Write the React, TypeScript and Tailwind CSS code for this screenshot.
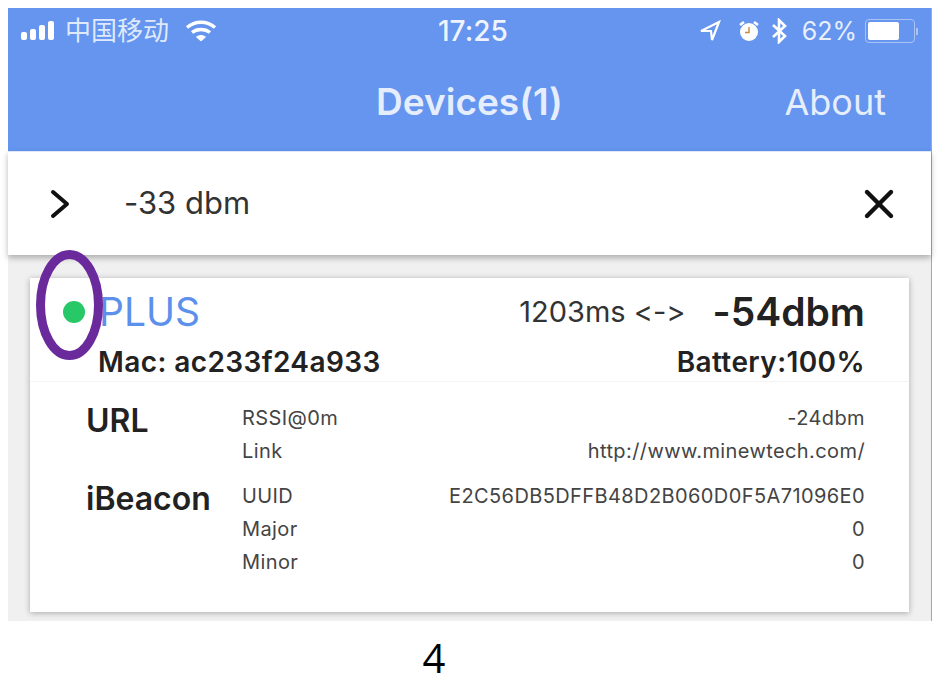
import { X } from "lucide-react";

const sans = "font-['Inter','Noto_Sans_CJK_SC',sans-serif] [font-variant-ligatures:none]";

function Signal() {
  return (
    <svg width="36" height="20" viewBox="0 0 36 20" fill="#fff">
      <rect x="0" y="11" width="6" height="8" rx="2" />
      <rect x="9" y="8" width="6" height="11" rx="2" />
      <rect x="18" y="4" width="6" height="15" rx="2" />
      <rect x="27" y="0" width="6" height="19" rx="2" />
    </svg>
  );
}

function Wifi() {
  return (
    <svg width="32" height="22" viewBox="0 0 32 22" fill="none" stroke="#fff" strokeWidth="3.4">
      <path d="M2 7.5C10 .5 22 .5 30 7.5" />
      <path d="M7 12.5C12 8.5 20 8.5 25 12.5" />
      <path d="M11.5 17C14 15 18 15 20.5 17L16 21Z" fill="#fff" strokeWidth="1" />
    </svg>
  );
}

function StatusIcons() {
  return (
    <div className="flex items-center">
      <svg width="22" height="22" viewBox="0 0 22 22" fill="none" stroke="#fff" strokeWidth="2.2" className="mr-[16px]">
        <path d="M20 2 2 11l10 0 1 9Z" />
      </svg>
      <svg width="24" height="24" viewBox="0 0 24 24" className="mr-[10px]">
        <circle cx="12" cy="13" r="9" fill="#fff" />
        <path d="M3 6l4-3M21 6l-4-3" stroke="#fff" strokeWidth="2.6" />
        <path d="M12 8v5.5H8" fill="none" stroke="#c98a3a" strokeWidth="1.4" />
      </svg>
      <svg width="16" height="26" viewBox="0 0 16 26" fill="none" stroke="#fff" strokeWidth="2.6" className="mr-[15px]">
        <path d="M2 7l12 11-6 6V2l6 6L2 19" />
      </svg>
      <span className="mr-[8px] text-[25px] leading-none text-[#e8effd]">62%</span>
      <div className="flex h-[24px] w-[50px] items-center rounded-[4px] border border-[#a9c3f5] p-[2px]">
        <div className="h-full w-[31px] rounded-[2px] bg-white" />
      </div>
      <div className="ml-[1px] h-[7px] w-[2px] bg-[#a9c3f5]" />
    </div>
  );
}

function DataRow({ label, value }: { label: string; value: string }) {
  return (
    <div className="flex h-[33px] items-center justify-between text-[20px] tracking-[0.4px] text-[#444]">
      <span>{label}</span>
      <span>{value}</span>
    </div>
  );
}

function Frame({ name, rows }: { name: string; rows: [string, string][] }) {
  return (
    <div className="flex">
      <div className="w-[156px] pt-[2px] text-[32px] leading-[36px] font-semibold text-[#222]">{name}</div>
      <div className="flex-1">
        {rows.map(([label, value]) => (
          <DataRow key={label} label={label} value={value} />
        ))}
      </div>
    </div>
  );
}

export default function App() {
  return (
    <div className={`relative h-[677px] w-[939px] bg-white pt-2 pl-2 ${sans}`}>
      <div className="flex h-[613px] w-[924px] flex-col border-r border-[#a8a8a8]">
        <header className="h-[143px] bg-[#6595ee] text-white">
          <div className="relative flex h-[46px] items-center justify-between pr-[13px] pl-[13px]">
            <div className="flex items-center">
              <Signal />
              <span className="ml-[8px] text-[26px] leading-none text-[#dfe9fc]">中国移动</span>
              <div className="ml-[16px]">
                <Wifi />
              </div>
            </div>
            <span className="absolute left-[430px] text-[28px] font-medium text-[#eef3fe]">17:25</span>
            <StatusIcons />
          </div>
          <div className="relative flex h-[97px] items-start justify-center pt-[24px]">
            <span className="text-[37px] leading-[48px] font-semibold text-[#e6eefd]">Devices(1)</span>
            <span className="absolute right-[45px] text-[36px] leading-[48px] text-[#e6eefd]">About</span>
          </div>
        </header>

        <div className="relative z-10 flex h-[104px] items-center justify-between border-t border-[#dfe8fb] bg-white pr-[28px] pl-[41px] shadow-[0_3px_6px_rgba(0,0,0,0.28)]">
          <div className="flex items-center">
            <svg width="22" height="32" viewBox="0 0 22 32" fill="none" stroke="#111" strokeWidth="4" strokeLinecap="round" strokeLinejoin="round">
              <path d="M4 4l14 12L4 28" />
            </svg>
            <span className="ml-[53px] text-[31px] text-[#333]">-33 dbm</span>
          </div>
          <X size={48} strokeWidth={2.2} className="text-[#111]" />
        </div>

        <div className="flex-1 bg-[#f0f0f0] pt-[23px] pr-[22px] pb-[9px] pl-[22px]">
          <div className="h-[334px] bg-white shadow-[0_1px_6px_rgba(0,0,0,0.3)]">
            <div className="flex h-[104px] justify-between border-b border-[#f4f4f4] pr-[44px] pl-[68px]">
              <div className="pt-[12px]">
                <div className="flex items-center">
                  <span className="-ml-[35px] h-[22px] w-[22px] rounded-full bg-[#27c868]" />
                  <span className="ml-[14px] text-[39px] leading-[44px] text-[#5d90ea]">PLUS</span>
                </div>
                <div className="mt-[10px] text-[28px] leading-[36px] font-semibold tracking-[0.4px] text-[#222]">
                  Mac: ac233f24a933
                </div>
              </div>
              <div className="pt-[12px] text-right">
                <div className="flex h-[44px] items-center justify-end">
                  <span className="mr-[27px] text-[29px] text-[#333]">1203ms &lt;-&gt;</span>
                  <span className="text-[39px] font-semibold text-[#222]">-54dbm</span>
                </div>
                <div className="mt-[10px] text-[28px] leading-[36px] font-semibold tracking-[0.4px] text-[#222]">
                  Battery:100%
                </div>
              </div>
            </div>
            <div className="pt-[19px] pr-[44px] pl-[56px]">
              <Frame name="URL" rows={[["RSSI@0m", "-24dbm"], ["Link", "http://www.minewtech.com/"]]} />
              <div className="mt-[12px]">
                <Frame
                  name="iBeacon"
                  rows={[["UUID", "E2C56DB5DFFB48D2B060D0F5A71096E0"], ["Major", "0"], ["Minor", "0"]]}
                />
              </div>
            </div>
          </div>
        </div>
      </div>

      <div className="mt-[18px] w-[852px] text-center font-['Open_Sans',sans-serif] text-[40px] leading-[38px] text-black">4</div>

      <svg width="70" height="114" viewBox="0 0 70 114" fill="none" className="absolute top-[248px] left-[34px] z-20">
        <ellipse cx="35.5" cy="57" rx="29" ry="50.5" stroke="#6a2a9c" strokeWidth="9" />
      </svg>
    </div>
  );
}
